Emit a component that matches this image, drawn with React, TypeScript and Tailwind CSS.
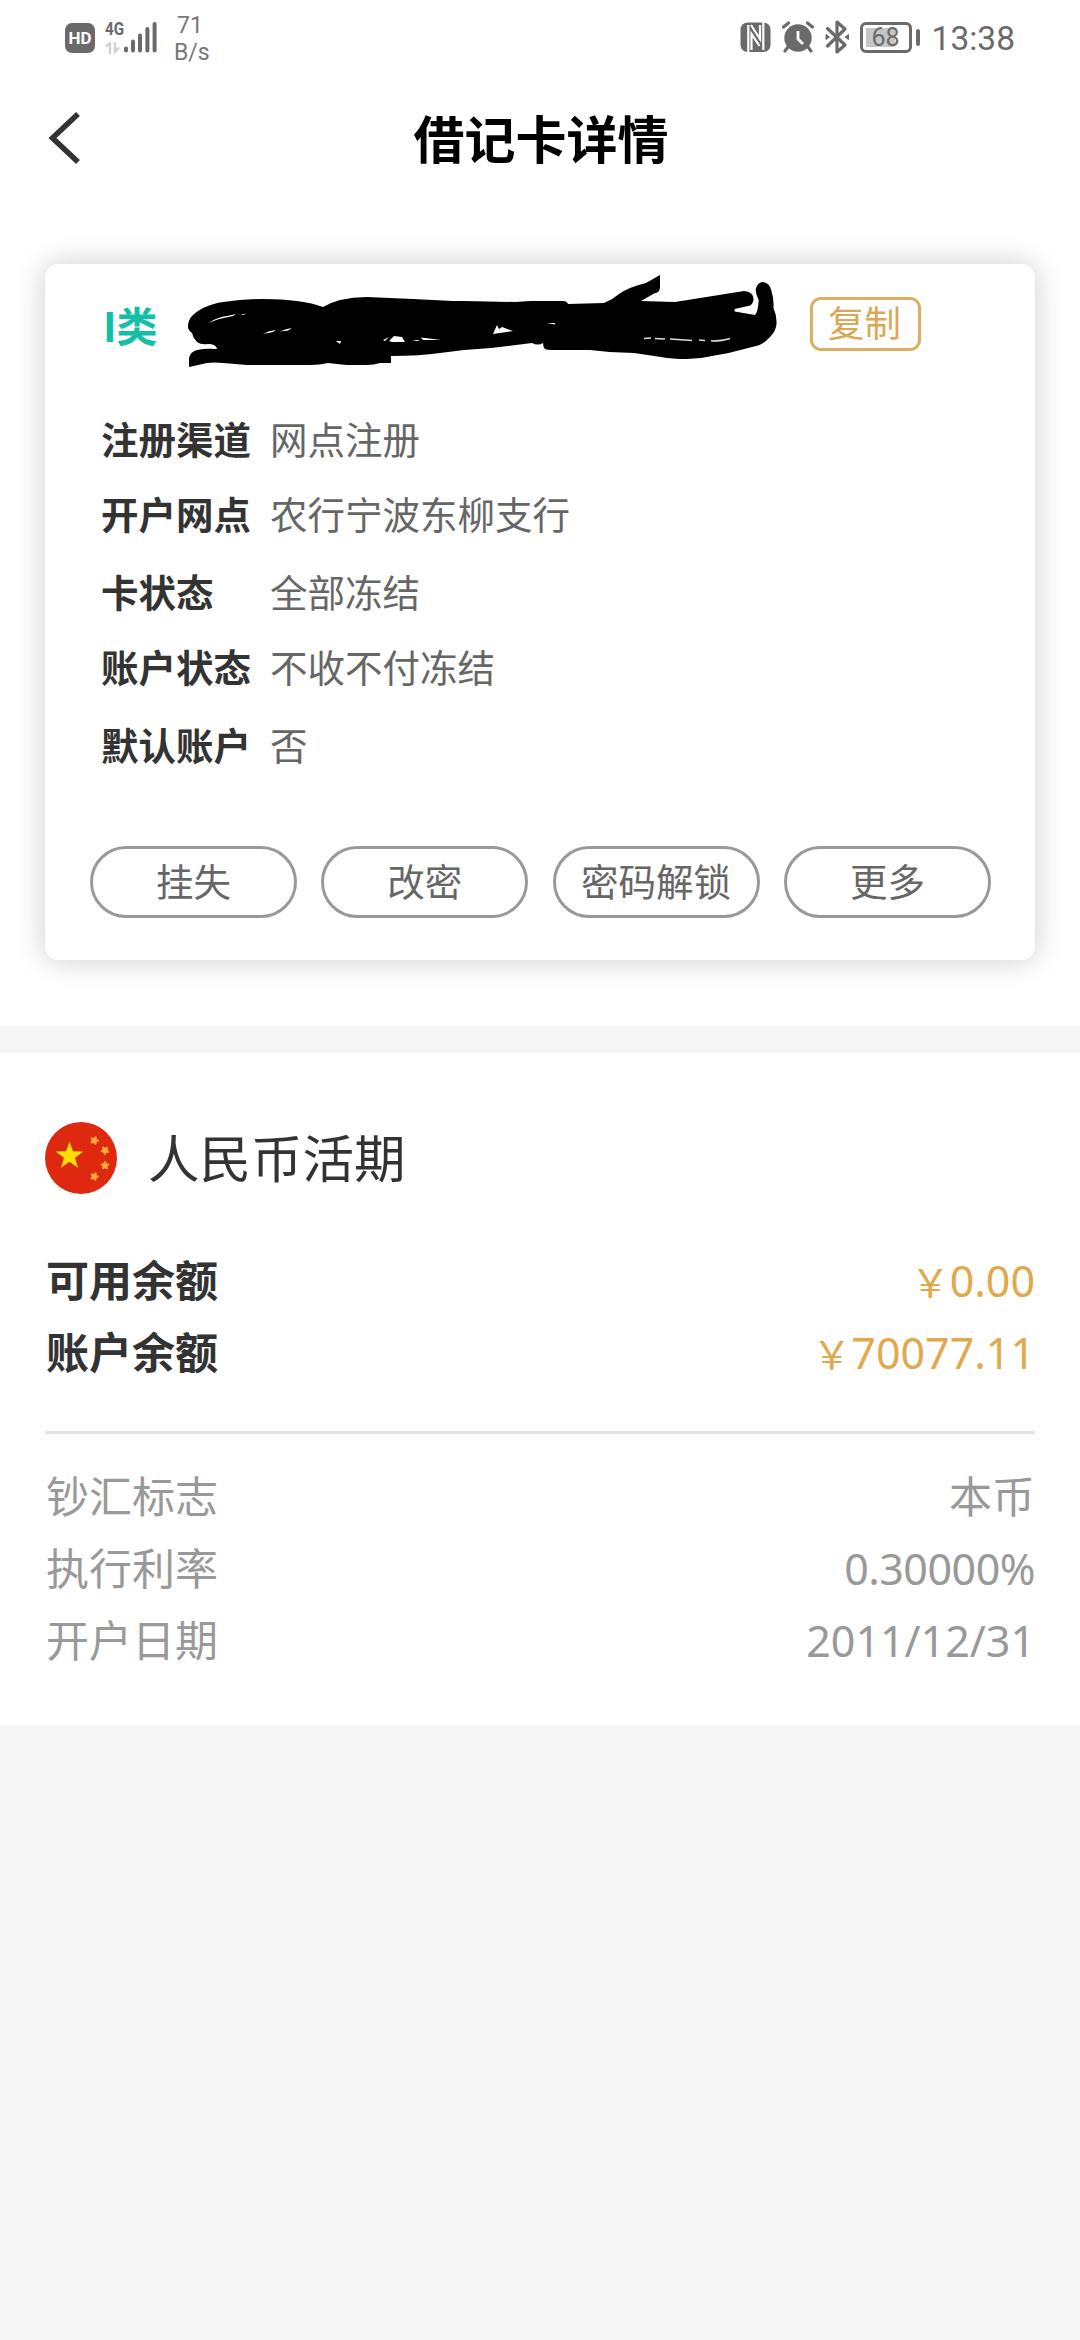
import type { ReactNode } from "react";

const infoRows = [
  { label: "注册渠道", value: "网点注册", className: "h-[75px]" },
  { label: "开户网点", value: "农行宁波东柳支行", className: "h-[75px]" },
  { label: "卡状态", value: "全部冻结", className: "mt-[3px] h-[75px]" },
  { label: "账户状态", value: "不收不付冻结", className: "h-[75px]" },
  { label: "默认账户", value: "否", className: "mt-[3px] h-[75px]" },
];

const actions = ["挂失", "改密", "密码解锁", "更多"];

function StatusBar() {
  return (
    <div className="flex h-20 items-start justify-between pl-[65px] pr-[65px] font-[Roboto,sans-serif] text-[#6a6a6a]">
      <div className="flex items-start">
        <span className="mt-[23px] flex h-[30px] w-[30px] items-center justify-center rounded-[7px] bg-[#6a6a6a] text-[17px] font-bold leading-none text-white">
          HD
        </span>
        <div className="ml-[10px] mt-[20px] w-[18px]">
          <p className="origin-left scale-x-[0.8] text-[19px] font-bold leading-[18px]">4G</p>
          <svg className="mt-[4px]" width="16" height="12" viewBox="0 0 16 12" fill="none" stroke="#d2d2d2" strokeWidth="2.400">
            <path d="M1 4.500l4-3.500v11M10 0v10l4-4.500" />
          </svg>
        </div>
        <svg className="mt-[21px]" width="34" height="34" viewBox="122 21 34 34" stroke="#6a6a6a" strokeWidth="4" strokeLinecap="round">
          <path d="M125 48.500v2M132 41.500v9M139 35.500v15M146.400 29v21.500M153.600 24v26.500" />
        </svg>
        <div className="ml-[17px] mt-[12px] text-[23px] leading-[27px] text-[#777777]">
          <p className="pl-[3px]">71</p>
          <p>B/s</p>
        </div>
      </div>

      <div className="flex items-start">
        <svg className="mt-[20px]" width="112" height="36" viewBox="738 20 112 36">
          {/* nfc */}
          <rect x="739.500" y="22.500" width="30" height="29.500" rx="7" fill="#6a6a6a" />
          <path d="M747.300 53V25M750.500 50V34l8 12M750 25l9 14V25M762.300 22v28" fill="none" stroke="#fff" strokeWidth="2.200" />
          {/* alarm */}
          <circle cx="797" cy="38" r="13.700" fill="#6a6a6a" />
          <path d="M782.500 27l5-4M811.500 27l-5-4M787 47l-3 4M807 47l3 4" fill="none" stroke="#6a6a6a" strokeWidth="3.200" strokeLinecap="round" />
          <path d="M797 31v8l5 5" fill="none" stroke="#fff" strokeWidth="2.800" />
          {/* bluetooth */}
          <path d="M826.500 28.500L844 45l-8 7V22l8 7-17.500 17" fill="none" stroke="#6a6a6a" strokeWidth="3.200" strokeLinejoin="round" strokeLinecap="round" />
          <path d="M825 34.500l3.500 2.500-3.500 2.500zM847.500 34.500l-3.500 2.500 3.500 2.500z" fill="#6a6a6a" stroke="#6a6a6a" />
        </svg>
        <div className="ml-[9px] mt-[22px] flex items-center">
          <div className="relative flex h-[31px] w-[52px] items-center justify-center rounded-[6px] border-[3px] border-[#6a6a6a]">
            <div className="absolute left-[3px] top-[3px] h-[19px] w-[29px] bg-[#c6c6c6]" />
            <span className="relative text-[25px] leading-none">68</span>
          </div>
          <div className="ml-[4px] h-[17px] w-[4px] rounded-full bg-[#6a6a6a]" />
        </div>
        <span className="ml-[12px] mt-[19px] text-[33.500px] leading-[40px]">13:38</span>
      </div>
    </div>
  );
}

// hand-drawn strokes hiding the card number
function Scribble() {
  return (
    <svg width="590" height="93" viewBox="188 275 590 93">
      <path d="M188 327C188 320 191 317 193 315C201 308 210 304 223 302Q243 299 263 299Q282 299 297 301Q313 303 323 307Q332 302 340 300Q353 297 367 297L413 299L453 301L464 301L515 302L531 301H563Q567 301 568 304L604 303Q612 300 619 294Q629 287 646 283L660 275V288Q659 293 655 293L641 301L675 302L744 291Q754 292 753.500 300Q752 306 748 306L734.600 309V311.500L755 315Q758 312 758.700 300Q755 292 756 288Q758 282 763 282Q770 283 771.500 291Q774 299 773.500 308Q777 316 776.500 324Q776 331 770 337Q764 344 756 346L728.600 353L712 356Q700 359 687 359Q672 359 661 357L634 353Q612 353 590 350H551Q544 350 543.600 347L543 343Q538 346 532 343L491 348L464 350L440 353Q420 356 391 356V363H380Q374 365 367 365H347Q336 364 328 363Q320 365 310 365H247L223 363Q214 362 207 363L189 367V358Q190 352 197 350Q206 348 217 349Q216 344 208 344Q201 345 197 342Q193 338 192 333Q188 330 188 327Z" fill="#000" />
      <g fill="#fff">
        <path d="M208 323Q218 317 227 316L236 314L233 316Q220 318 208 323ZM241 314.500l6-1-4 1.500ZM263 334Q269 330.500 276 330L273 332ZM280 331.500Q286 328.500 292 328L288 330.500ZM336 341h5l-1 3ZM392 342L389 341L394 336L402 337L405 342ZM421 337.500L441 340L423 340ZM493 334L497 325L499 329L502 327L513 331ZM547 323h8v1.500ZM383 340l6-3-4 4ZM412 341l5-1 3 1Z" />
      </g>
      <path d="M644 338.500l7-.500M655 338.500l10 .5M670 339l22 1.500M699 340l6 .5M711 341q12 0 19-2.500" fill="none" stroke="#ddd" strokeWidth="1.600" />
    </svg>
  );
}

function FlagIcon() {
  const star = "M0-10L2.400-3.200 9.600-3.100 3.800 1.200 5.900 8.100 0 4 -5.900 8.100 -3.800 1.200 -9.600-3.100 -2.400-3.200Z";
  return (
    <svg width="72" height="72" viewBox="0 0 72 72">
      <circle cx="36" cy="36" r="36" fill="#de2910" />
      <path d={star} transform="translate(24.500 34) scale(1.450)" fill="#ffde00" />
      <g fill="#ffab38" stroke="#ffab38" strokeWidth="6" strokeLinejoin="round">
        <path d={star} transform="translate(49.500 18.500) rotate(20) scale(.34)" />
        <path d={star} transform="translate(60 28.500) rotate(40) scale(.34)" />
        <path d={star} transform="translate(60 43.500) scale(.34)" />
        <path d={star} transform="translate(49.500 54.500) rotate(20) scale(.34)" />
      </g>
    </svg>
  );
}

function Row({ label, children, className }: { label: string; children: ReactNode; className?: string }) {
  return (
    <div className="flex h-[72px] items-center justify-between">
      <span className={className}>{label}</span>
      <span className="pt-[4px] font-['Noto_Sans','Noto_Sans_CJK_SC',sans-serif] font-normal">{children}</span>
    </div>
  );
}

export default function App() {
  return (
    <div className="min-h-[2340px] w-[1080px] bg-[#f6f6f6] font-['Noto_Sans_CJK_SC',sans-serif] text-[#333333]">
      <div className="h-[1026px] bg-white">
        <StatusBar />

        <header className="flex h-[116px] items-center pl-[48px] pr-[48px]">
          <svg width="34" height="52" viewBox="0 0 34 52" fill="none" stroke="#333333" strokeWidth="5.500">
            <path d="M30 2L4.500 26l25.500 24" />
          </svg>
          <h1 className="flex-1 pb-px pr-[32px] text-center text-[51px] font-bold leading-none text-black">借记卡详情</h1>
        </header>

        <section className="mx-[45px] mt-[68px] h-[696px] rounded-[14px] bg-white pt-[11px] shadow-[0_0_30px_rgba(0,0,0,0.2)]">
          <div className="flex h-[93px] items-start pl-[58px]">
            <span className="mt-[19px] w-[85px] whitespace-nowrap text-[41px] font-bold leading-[60px] text-[#13bfa6]">I类</span>
            <Scribble />
            <button className="ml-[32px] mt-[22px] flex h-[54px] w-[111px] items-center justify-center rounded-[11px] border-[3px] border-[#dcae62] pb-[4px] pr-[2px] text-[36.500px] leading-none text-[#d9a854]">
              复制
            </button>
          </div>

          <div className="mt-[32px] pl-[56px] text-[37.500px] leading-none">
            {infoRows.map((row) => (
              <div key={row.label} className={`flex items-center ${row.className}`}>
                <span className="w-[169px] font-bold">{row.label}</span>
                <span className="text-[#666666]">{row.value}</span>
              </div>
            ))}
          </div>

          <div className="mt-[65px] flex gap-[24.300px] pl-[45px]">
            {actions.map((name) => (
              <button
                key={name}
                className="flex h-[72px] w-[207px] items-center justify-center rounded-full border-[3px] border-[#999999] pb-[4px] text-[37.500px] leading-none text-[#666666]"
              >
                {name}
              </button>
            ))}
          </div>
        </section>
      </div>

      <section className="mt-[27px] h-[672px] bg-white px-[45px] pt-[69px] text-[43px] leading-none">
        <div className="flex h-[72px] items-center gap-[31px]">
          <FlagIcon />
          <h2 className="pb-[4px] text-[51.500px]">人民币活期</h2>
        </div>

        <div className="mt-[48px] pl-px">
          <Row label="可用余额" className="font-bold">
            <span className="text-[#dfa94e]">
              <span className="text-[39px]">￥</span>0.00
            </span>
          </Row>
          <Row label="账户余额" className="font-bold">
            <span className="text-[#dfa94e]">
              <span className="text-[39px]">￥</span>70077.11
            </span>
          </Row>
        </div>

        <div className="mb-[24px] mt-[45px] h-[3px] bg-[#e4e4e4]" />

        <div className="pl-px text-[#999999]">
          <Row label="钞汇标志">本币</Row>
          <Row label="执行利率">
            <span className="tracking-[-0.5px]">0.30000%</span>
          </Row>
          <Row label="开户日期">2011/12/31</Row>
        </div>
      </section>
    </div>
  );
}
